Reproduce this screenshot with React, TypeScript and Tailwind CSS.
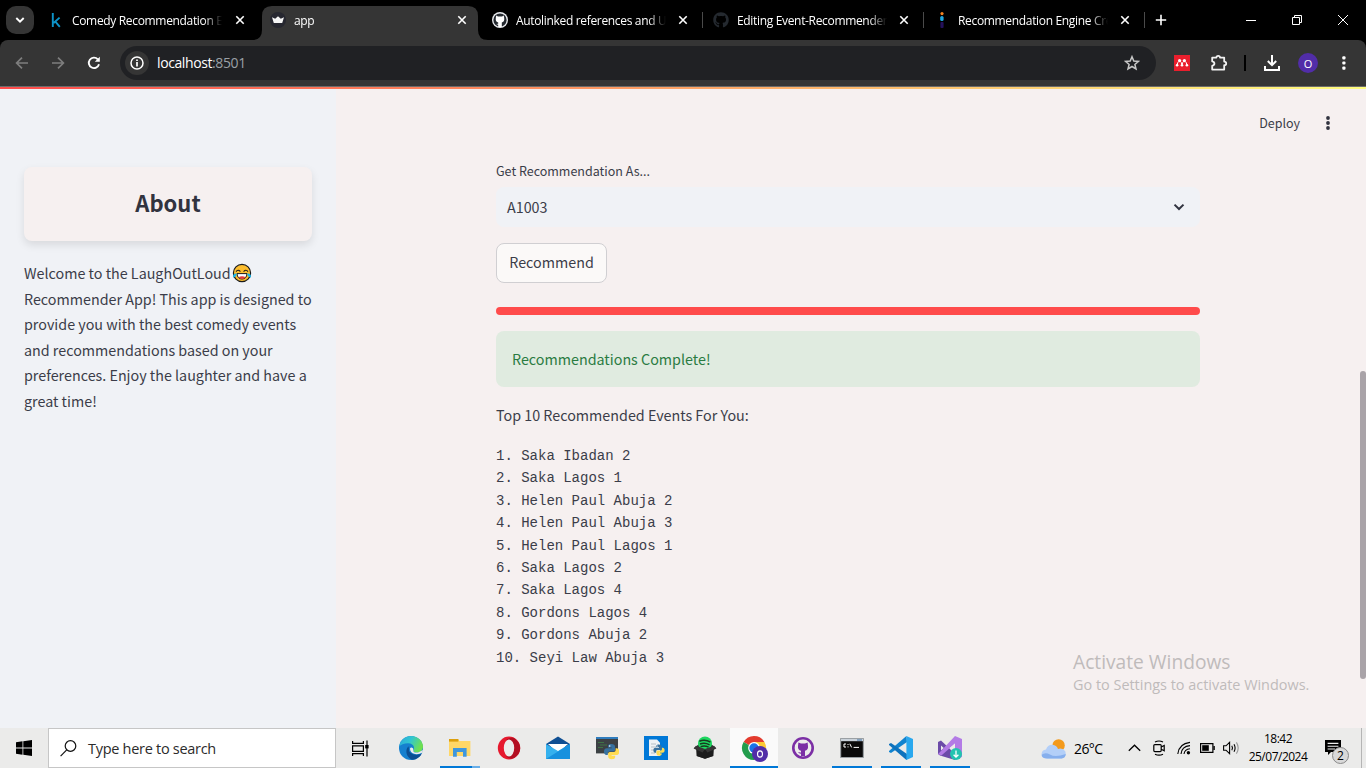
import React from "react";
import { FaGithub } from "react-icons/fa";

const TABS = [
  { title: "Comedy Recommendation Engine", icon: "k", active: false, box: "w-[222px] pl-2" },
  { title: "app", icon: "crown", active: true, box: "w-[221px] pl-2" },
  { title: "Autolinked references and URLs", icon: "github", active: false, box: "w-[221px] pl-[9px]" },
  { title: "Editing Event-Recommender/README", icon: "githubDark", active: false, box: "w-[221px] pl-[9px]" },
  { title: "Recommendation Engine Create", icon: "dots", active: false, box: "w-[221px] pl-[9px]" },
];

const EVENTS = [
  "1. Saka Ibadan 2",
  "2. Saka Lagos 1",
  "3. Helen Paul Abuja 2",
  "4. Helen Paul Abuja 3",
  "5. Helen Paul Lagos 1",
  "6. Saka Lagos 2",
  "7. Saka Lagos 4",
  "8. Gordons Lagos 4",
  "9. Gordons Abuja 2",
  "10. Seyi Law Abuja 3",
];

function Favicon({ kind }: { kind: string }) {
  if (kind === "k")
    return (
      <svg width="16" height="16" viewBox="0 0 16 16" fill="none" stroke="#0d93c8" strokeWidth="1.9">
        <path d="M4.8 1V15M11.6 5.6L5.6 11M7.4 9.6L11.8 14.8" />
      </svg>
    );
  if (kind === "crown")
    return (
      <svg width="16" height="16" viewBox="0 0 16 16">
        <circle cx="8" cy="8" r="8" fill="#262730" />
        <path d="M2 5.2L5.2 6.8L8 4.2L10.8 6.8L14 5.2L12.2 11H3.8Z" fill="#f5f5f5" />
      </svg>
    );
  if (kind === "github")
    return (
      <svg width="16" height="16" viewBox="0 0 16 16">
        <circle cx="8" cy="8" r="8" fill="#e8eaee" />
        <circle cx="8" cy="8" r="6.6" fill="#24292f" />
        <path d="M4.2 3.6L6 4.4H10L11.8 3.6L12.2 6C12.6 9 11.4 10 9.8 10.4V15H6.2V12.8L4.2 12L6.2 11.8V10.4C4.6 10 3.4 9 3.8 6Z" fill="#fff" />
      </svg>
    );
  if (kind === "githubDark") return <FaGithub size={16} color="#24292f" />;
  return (
    <svg width="16" height="16" viewBox="0 0 16 16">
      <circle cx="8" cy="1.6" r="1.6" fill="#f58220" />
      <rect x="6.2" y="4" width="3.4" height="5" rx="1.6" fill="#1fa8e0" />
      <rect x="6.4" y="10" width="3.2" height="6" rx="1" fill="#24115a" />
    </svg>
  );
}

function Close() {
  return (
    <svg width="10" height="10" viewBox="0 0 10 10" stroke="#fff" strokeWidth="1.6">
      <path d="M1.3 1.3L8.7 8.7M8.7 1.3L1.3 8.7" />
    </svg>
  );
}

function TabStrip() {
  return (
    <div className="flex h-10 shrink-0 bg-black pl-1.5">
      <button className="mt-1.5 flex h-7 w-7 shrink-0 items-center justify-center rounded-[10px] bg-[#353535]">
        <svg width="10" height="8" viewBox="0 0 10 8" fill="none" stroke="#fff" strokeWidth="1.9">
          <path d="M1.3 2L5 5.7L8.7 2" />
        </svg>
      </button>
      <div className="ml-1.5 flex w-[1105px]">
        {TABS.map((t, i) => (
          <div key={t.title} className={`relative flex h-10 shrink-0 items-center ${t.box}`}>
            {t.active && (
              <svg className="absolute -left-[10px] top-1.5" width="236" height="34" viewBox="0 0 236 34" fill="#353535">
                <path d="M0 34Q10 34 10 24V10Q10 0 20 0H216Q226 0 226 10V24Q226 34 236 34Z" />
              </svg>
            )}
            <div className="relative flex w-4 shrink-0 justify-center">
              <Favicon kind={t.icon} />
            </div>
            <div className="relative ml-2 w-[150px] shrink-0 overflow-hidden whitespace-nowrap pt-px font-['Open_Sans',sans-serif] text-[12px] leading-5 tracking-[-0.33px] text-white [mask-image:linear-gradient(to_right,black_88%,transparent)]">
              {t.title}
            </div>
            <div className={i > 1 ? "relative ml-[12px]" : "relative ml-[13px]"}>
              <Close />
            </div>
            {i > 1 && <div className="ml-auto mr-px h-4 w-px bg-[#4a4a4a]" />}
          </div>
        ))}
      </div>
      <div className="flex items-center pl-[10px]">
        <svg width="12" height="12" viewBox="0 0 12 12" stroke="#fff" strokeWidth="1.6">
          <path d="M6 .8V11.2M.8 6H11.2" />
        </svg>
      </div>
      <div className="ml-auto flex">
        <div className="flex w-[46px] items-center justify-center">
          <div className="mt-px h-px w-[10px] bg-white" />
        </div>
        <div className="flex w-[46px] items-center justify-center">
          <svg width="10" height="10" viewBox="0 0 10 10" fill="none" stroke="#fff">
            <path d="M.5 2.5H7.5V9.5H.5ZM2.5 2.5V.5H9.5V7.5H7.5" />
          </svg>
        </div>
        <div className="flex w-[46px] items-center justify-center">
          <svg width="10" height="10" viewBox="0 0 10 10" stroke="#fff">
            <path d="M0 0L10 10M10 0L0 10" />
          </svg>
        </div>
      </div>
    </div>
  );
}

function Toolbar() {
  return (
    <div className="shrink-0 bg-black">
      <div className="flex h-[47px] items-center rounded-t-lg border-b border-[#6b6b6b] bg-[#353535] pl-[14px]">
        <svg width="16" height="16" viewBox="0 0 16 16" fill="none" stroke="#7e7e7e" strokeWidth="1.7">
          <path d="M14 8H3M8 2.6L2.6 8L8 13.4" />
        </svg>
        <svg className="ml-5" width="16" height="16" viewBox="0 0 16 16" fill="none" stroke="#7e7e7e" strokeWidth="1.7">
          <path d="M2 8H13M8 2.6L13.4 8L8 13.4" />
        </svg>
        <svg className="ml-5" width="16" height="16" viewBox="0 0 16 16" fill="none" stroke="#fff" strokeWidth="1.9">
          <path d="M13 9.3A5.2 5.2 0 1 1 11.8 4.3" />
          <path d="M13.8 1.8V6.8H8.8Z" fill="#fff" stroke="none" />
        </svg>
        <div className="ml-[18px] flex h-[34px] w-[1036px] items-center rounded-full bg-[#202124] pl-[5px] pr-[16px]">
          <div className="flex h-6 w-6 items-center justify-center rounded-full bg-[#353535]">
            <svg width="14" height="14" viewBox="0 0 14 14" fill="none" stroke="#fff" strokeWidth="1.5">
              <circle cx="7" cy="7" r="6" />
              <path d="M7 6V10.4M7 3.6V5" strokeWidth="1.7" />
            </svg>
          </div>
          <div className="ml-2 font-['Open_Sans',sans-serif] text-[14px] leading-5 tracking-[-0.4px] text-white">
            localhost<span className="text-[#9aa0a6]">:8501</span>
          </div>
          <svg className="ml-auto" width="16" height="16" viewBox="0 0 16 16" fill="none" stroke="#c7c7c7" strokeWidth="1.5">
            <path d="M8 1.7L9.8 6L14.4 6.4L10.9 9.4L12 14L8 11.5L4 14L5.1 9.4L1.6 6.4L6.2 6Z" />
          </svg>
        </div>
        <svg className="ml-[18px]" width="16" height="16" viewBox="0 0 16 16">
          <rect width="16" height="16" fill="#ea1f2d" />
          <g fill="#fff">
            <circle cx="5.6" cy="5.6" r="1.6" />
            <circle cx="10.4" cy="5.6" r="1.6" />
            <circle cx="3.1" cy="10.2" r="1.3" />
            <circle cx="8" cy="10.2" r="1.3" />
            <circle cx="12.9" cy="10.2" r="1.3" />
          </g>
          <path d="M3.1 10Q3.2 7.4 5 6.4M7.8 9.4Q7.6 7.4 6.4 6.4M8.2 9.4Q8.4 7.4 9.6 6.4M12.9 10Q12.8 7.4 11 6.4" fill="none" stroke="#fff" strokeWidth="1" />
        </svg>
        <svg className="ml-5" width="18" height="18" viewBox="0 0 18 18" fill="none" stroke="#f2f2f2" strokeWidth="1.8" strokeLinejoin="round">
          <path d="M2.2 3.6H6.4Q6.4 1.8 8.2 1.8T10 3.6H14.2V7.6Q16.2 7.6 16.2 9.4T14.2 11.2V15.6H2.2V11.8Q4.4 11.4 4.4 9.6T2.2 7.4Z" />
        </svg>
        <div className="ml-4 h-4 w-0.5 bg-black" />
        <svg className="ml-[18px]" width="16" height="16" viewBox="0 0 16 16" fill="none" stroke="#fff" strokeWidth="2">
          <path d="M8 0V10M3.8 6L8 10.2L12.2 6M1 11V15H15V11" />
        </svg>
        <div className="ml-[18px] flex h-5 w-5 items-center justify-center rounded-full bg-[#512da8] font-['Open_Sans',sans-serif] text-[11px] leading-none text-white">
          O
        </div>
        <svg className="ml-6" width="4" height="16" viewBox="0 0 4 16" fill="#fff">
          <rect x=".3" y="1.2" width="3.2" height="3.2" rx="1" />
          <rect x=".3" y="6.4" width="3.2" height="3.2" rx="1" />
          <rect x=".3" y="11.6" width="3.2" height="3.2" rx="1" />
        </svg>
      </div>
    </div>
  );
}

function Joy() {
  return (
    <svg className="ml-px inline-block align-[-4px]" width="20" height="20" viewBox="0 0 20 20">
      <circle cx="10" cy="10" r="8.6" fill="#fcbd2e" stroke="#1b1b1b" strokeWidth="1.2" />
      <path d="M4 8.6Q6 6 8.4 8.6M11.6 8.6Q14 6 16 8.6" fill="none" stroke="#1b1b1b" strokeWidth="1.1" />
      <path d="M5 10.6H15Q14.6 16 10 16T5 10.6Z" fill="#fff" stroke="#1b1b1b" />
      <path d="M6.4 14.2Q10 12.4 13.6 14.2Q12.4 16 10 16T6.4 14.2Z" fill="#e53935" />
      <path d="M1 14.4Q.6 10.6 4.6 10.2Q5 14 1 14.4ZM19 14.4Q19.4 10.6 15.4 10.2Q15 14 19 14.4Z" fill="#19b5ea" />
    </svg>
  );
}

function Sidebar() {
  return (
    <aside className="w-[336px] shrink-0 bg-[#f0f2f6] px-6 pt-[78px] text-[#3b3d49]">
      <div className="flex h-[74px] items-center justify-center rounded-lg bg-[#f6f0f0] pb-1 shadow-[0_4px_8px_rgba(0,0,0,0.1)]">
        <h2 className="text-[22px] font-bold leading-none text-[#31333f]">About</h2>
      </div>
      <p className="mt-[19px] whitespace-nowrap text-[14.32px] leading-[25.6px]">
        Welcome to the LaughOutLoud
        <Joy />
        <br />
        Recommender App! This app is designed to
        <br />
        provide you with the best comedy events
        <br />
        and recommendations based on your
        <br />
        preferences. Enjoy the laughter and have a
        <br />
        great time!
      </p>
    </aside>
  );
}

function MainPanel() {
  return (
    <main className="relative flex-1 bg-[#f6f0f0] pl-40 text-[#3b3d49]">
      <div className="absolute right-[36px] top-[24px] flex items-center">
        <span className="text-[12.5px] leading-5">Deploy</span>
        <svg className="ml-[26px]" width="4" height="14" viewBox="0 0 4 14" fill="#31333f">
          <circle cx="2" cy="2" r="1.9" />
          <circle cx="2" cy="7" r="1.9" />
          <circle cx="2" cy="12" r="1.9" />
        </svg>
      </div>
      <div className="w-[704px] pt-[72px]">
        <div className="text-[12.5px] leading-5">Get Recommendation As...</div>
        <div className="mt-[6px] flex h-10 items-center rounded-lg bg-[#f0f2f6] pl-[11px] pr-[15px]">
          <span className="text-[14.32px] leading-6">A1003</span>
          <svg className="ml-auto" width="12" height="8" viewBox="0 0 12 8" fill="none" stroke="#31333f" strokeWidth="2">
            <path d="M1.5 1.6L6 6L10.5 1.6" />
          </svg>
        </div>
        <button className="mt-4 flex h-10 w-[111px] items-center justify-center rounded-lg border border-[#d0cfd2] bg-[#fbf9f8] pb-0.5 text-[14.32px] leading-6">
          Recommend
        </button>
        <div className="mt-6 h-2 rounded bg-[#ff4b4b]" />
        <div className="mt-4 flex h-14 items-center rounded-lg bg-[#e0ebe0] pl-4 text-[14.32px] leading-6 text-[#2a7b42]">
          Recommendations Complete!
        </div>
        <p className="mt-[15px] text-[14.32px] leading-[25.6px]">Top 10 Recommended Events For You:</p>
        <div className="mt-[17.4px] whitespace-pre font-['Liberation_Mono',monospace] text-[14px] leading-[22.4px]">
          {EVENTS.map((e) => (
            <div key={e}>{e}</div>
          ))}
        </div>
      </div>
      <div className="absolute right-0 top-[282px] h-[308px] w-1.5 rounded-[3px] bg-[#a9a3a8]" />
      <div className="absolute left-[737px] top-[561px] whitespace-nowrap font-['Open_Sans',sans-serif] text-[#bfbbbb]">
        <div className="text-[19.2px] leading-6">Activate Windows</div>
        <div className="text-[14.43px] leading-[22px]">Go to Settings to activate Windows.</div>
      </div>
    </main>
  );
}

function EdgeIcon() {
  return (
    <svg width="24" height="24" viewBox="0 0 24 24">
      <defs>
        <linearGradient id="edgeTop" x1="0" y1="0" x2="1" y2=".4">
          <stop offset="0" stopColor="#2aa5dc" />
          <stop offset=".5" stopColor="#31c6d0" />
          <stop offset="1" stopColor="#6fe04f" />
        </linearGradient>
      </defs>
      <circle cx="12" cy="12" r="12" fill="#1580cf" />
      <path d="M.2 10.4C1.4 4 6.2 0 12 0C19 0 24 5.2 24 10.6C24 14.4 21.2 16.6 18 16.6C15.8 16.6 14 15.8 14.4 14.6C16 12.2 15 7.4 9.4 7.2C5.6 7 1.8 8.4 .2 10.4Z" fill="url(#edgeTop)" />
      <path d="M9.6 10.2C6.8 12.4 6.6 17.6 9.4 21C11 23 13 24 14 23.8C17.6 23.4 20.4 21.4 22.2 18.2C17 20.6 10.6 19.4 9.6 14.8Z" fill="#0c4f93" />
      <path d="M10.6 10.4Q8.6 13.6 11.2 16.6Q15.4 20.4 22.8 17.6Q22 19 21 20Q14 22 9.4 16.2Q8 12 10.6 10.4Z" fill="#0c4f93" />
      <path d="M14.2 12.4Q12 10.6 11 12.4Q10.8 16.4 16 18Q20 18.6 23.4 16.4L24 14L19 16.6Q14 16.8 14.4 14.4Z" fill="#ececeb" />
    </svg>
  );
}

function ExplorerIcon() {
  return (
    <svg width="24" height="24" viewBox="0 0 24 24">
      <path d="M1 3H10L11.4 5H22.4V20H1Z" fill="#ffd767" />
      <path d="M1 3H10.4V5.6H1Z" fill="#dc9f0d" />
      <path d="M5 12H18.6V20.8H15V16H8.8V20.8H5Z" fill="#3f97dd" />
    </svg>
  );
}

function OperaIcon() {
  return (
    <svg width="24" height="24" viewBox="0 0 24 24">
      <ellipse cx="12" cy="12" rx="11.2" ry="11.4" fill="#e6192e" />
      <path d="M17 2Q23 6 23.2 12T17 22Q12 24 9 20Q17 20 17 12T9 4Q12 1 17 2Z" fill="#b30f22" />
      <ellipse cx="12" cy="12" rx="5.2" ry="8.6" fill="#ececeb" />
    </svg>
  );
}

function MailIcon() {
  return (
    <svg width="24" height="24" viewBox="0 0 24 24">
      <path d="M0 8L12 .6L24 8V12H0Z" fill="#0f4f93" />
      <path d="M2 8H22L12 17Z" fill="#fff" />
      <path d="M0 8L12 15L24 8V23H0Z" fill="#35b1ee" />
      <path d="M0 23L24 8V23Z" fill="#1791de" />
    </svg>
  );
}

function Python({ x, y, s }: { x: number; y: number; s: number }) {
  return (
    <g transform={`translate(${x} ${y}) scale(${s})`}>
      <path d="M7.8 0C4 0 4.2 1.8 4.2 3.6H8V4.4H3C.8 4.4 0 5.8 0 8S1 11.6 2.6 11.6H4V9.4Q4 7.8 5.8 7.8H10Q11.6 7.8 11.6 6V3Q11.6 0 7.8 0Z" fill="#37719f" />
      <path d="M8.2 16C12 16 11.8 14.2 11.8 12.4H8V11.6H13C15.2 11.6 16 10.2 16 8S15 4.4 13.4 4.4H12.2V6.6Q12.2 8.4 10.2 8.4H6Q4.4 8.4 4.4 10V13Q4.4 16 8.2 16Z" fill="#ffdc52" />
      <circle cx="6" cy="2" r=".8" fill="#fff" />
    </g>
  );
}

function PyConsoleIcon() {
  return (
    <svg width="24" height="24" viewBox="0 0 24 24">
      <rect x="1" y="1" width="22" height="16.4" fill="#3c4144" />
      <rect x="1" y="1" width="22" height="2" fill="#2e7cbd" />
      <path d="M3 6.5H9M5 9H12M3 11.5H8" stroke="#3f7346" />
      <Python x={9} y={8} s={0.95} />
    </svg>
  );
}

function IdleIcon() {
  return (
    <svg width="24" height="24" viewBox="0 0 24 24">
      <rect width="24" height="24" fill="#0078d7" />
      <path d="M5 3.6H13L16 6.8V20H5Z" fill="#eef2f5" />
      <path d="M7 8H12M7 11H12M7 14H11M7 17H11" stroke="#b7c0c7" />
      <Python x={9.4} y={8.6} s={0.7} />
    </svg>
  );
}

function SpotifyIcon() {
  return (
    <svg width="24" height="24" viewBox="0 0 24 24">
      <path d="M1 12L6 8H18L23 12L20 14V20L12 22.8L4 20V14Z" fill="#303030" />
      <circle cx="12" cy="7.4" r="7" fill="#1ed760" />
      <path d="M6.4 5.2Q12 3.2 17.4 6M7 8Q12 6.4 16.6 8.8M7.6 10.6Q12 9.2 15.6 11.2" fill="none" stroke="#17391f" strokeWidth="1.5" />
      <path d="M3 10.4L12 13.4L21 10.4L20.4 20L12 22.8L3.6 20Z" fill="#1d1d1d" />
      <path d="M.6 12.4L3 9.8L12 13L9.6 16.4ZM23.4 12.4L21 9.8L12 13L14.4 16.4Z" fill="#363636" />
    </svg>
  );
}

function ChromeIcon() {
  return (
    <svg className="overflow-visible" width="24" height="24" viewBox="0 0 24 24">
      <path d="M12 12L1.6 6A12 12 0 0 1 22.4 6Z" fill="#e33b2e" />
      <path d="M12 12L1.6 6A12 12 0 0 0 12 24Z" fill="#229d4c" />
      <path d="M12 12V24A12 12 0 0 0 22.4 6H12Z" fill="#fcc934" />
      <circle cx="12" cy="12" r="5.9" fill="#fff" />
      <circle cx="12" cy="12" r="4.7" fill="#1a73e8" />
      <circle cx="18" cy="18" r="8" fill="#512da8" />
      <ellipse cx="18" cy="18" rx="2.5" ry="3.1" fill="none" stroke="#fff" strokeWidth="1.1" />
    </svg>
  );
}

function GithubDesktopIcon() {
  return (
    <svg width="24" height="24" viewBox="0 0 24 24">
      <circle cx="12" cy="12" r="11" fill="#7b2fa5" />
      <circle cx="12" cy="12" r="8.4" fill="#ececeb" />
      <path d="M7.4 6.6L10 7.6H14L16.6 6.6L17 10C17.4 13 16 14.4 14 14.8V20H10V17.8Q8 18 7 16Q8.6 16.6 10 16.4V14.8C8 14.4 6.6 13 7 10Z" fill="#7b2fa5" />
    </svg>
  );
}

function CmdIcon() {
  return (
    <svg width="24" height="24" viewBox="0 0 24 24">
      <rect x=".7" y="2.5" width="22.6" height="19" fill="#0a0a0a" stroke="#9aa0a4" />
      <rect x="1" y="3" width="22" height="2.2" fill="#c9d2da" />
      <path d="M17 4H22" stroke="#3f6f9f" />
      <path d="M6 8H4V11H6M8 8V9M8 10.4V11.4M9.8 7.8L11.6 11.4M13.6 11.4H19" fill="none" stroke="#fff" />
    </svg>
  );
}

function VsCodeIcon() {
  return (
    <svg width="24" height="24" viewBox="0 0 24 24">
      <path d="M17.4 0L18 6L2 17L0 16V15Z" fill="#1083cf" />
      <path d="M0 8L2 7L18 18V23.6L17.4 24L0 9Z" fill="#0d72bd" />
      <path d="M17.4 0L24 3V21L17.4 24Z" fill="#29a8ee" />
    </svg>
  );
}

function VisualStudioIcon() {
  return (
    <svg width="24" height="24" viewBox="0 0 24 24">
      <path d="M0 6L3 4.6L12 13L18 20L17 24L2 19.4L0 18Z" fill="#6b4aa8" />
      <path d="M3 9.4V14.6L5.8 12Z" fill="#ececeb" />
      <path d="M17 0L24 3V21L17 24V7.6L3.4 19.4L0 18L3 15Z" fill="#b37be6" />
      <path d="M17 7.6L11.6 12L17 16.4Z" fill="#ececeb" />
      <circle cx="18" cy="18" r="6" fill="#22c3b0" />
      <path d="M18 14.4V21M15.6 18.8L18 21.2L20.4 18.8" fill="none" stroke="#fff" strokeWidth="1.3" />
    </svg>
  );
}

const APPS = [
  { name: "edge", Icon: EdgeIcon, mark: "" },
  { name: "explorer", Icon: ExplorerIcon, mark: "split" },
  { name: "opera", Icon: OperaIcon, mark: "" },
  { name: "mail", Icon: MailIcon, mark: "" },
  { name: "pyconsole", Icon: PyConsoleIcon, mark: "" },
  { name: "idle", Icon: IdleIcon, mark: "" },
  { name: "spotify", Icon: SpotifyIcon, mark: "" },
  { name: "chrome", Icon: ChromeIcon, mark: "active" },
  { name: "github", Icon: GithubDesktopIcon, mark: "" },
  { name: "cmd", Icon: CmdIcon, mark: "open" },
  { name: "vscode", Icon: VsCodeIcon, mark: "open" },
  { name: "vs", Icon: VisualStudioIcon, mark: "open" },
];

function Mark({ kind }: { kind: string }) {
  if (kind === "split")
    return (
      <div className="flex h-0.5 w-10">
        <div className="w-8 bg-[#0078d7]" />
        <div className="w-2 bg-[#69aee8]" />
      </div>
    );
  if (kind === "active") return <div className="h-0.5 w-12 bg-[#0078d7]" />;
  if (kind === "open") return <div className="h-0.5 w-10 bg-[#0078d7]" />;
  return <div className="h-0.5" />;
}

function Taskbar() {
  return (
    <div className="flex h-10 shrink-0 bg-[#ebebea] font-['Open_Sans',sans-serif] text-black">
      <div className="flex w-12 items-center justify-center">
        <svg width="16" height="16" viewBox="0 0 16 16">
          <path d="M0 2.2L6.5 1.3V7.6H0ZM7.3 1.2L16 0V7.6H7.3ZM0 8.4H6.5V14.7L0 13.8ZM7.3 8.4H16V16L7.3 14.8Z" />
        </svg>
      </div>
      <div className="flex h-10 w-72 items-center border border-[#c6c6c6] bg-white pl-[11px]">
        <svg width="17" height="17" viewBox="0 0 17 17" fill="none" stroke="#111" strokeWidth="1.2">
          <circle cx="10.5" cy="6" r="5.3" />
          <path d="M6.7 9.8L.6 16.2" />
        </svg>
        <span className="ml-[11px] pt-0.5 text-[14.5px] tracking-[-0.29px] text-[#2b2b2b]">Type here to search</span>
      </div>
      <div className="flex w-[51px] items-center pl-4">
        <svg width="17" height="17" viewBox="0 0 17 17" fill="none" stroke="#000" strokeWidth="1.2">
          <path d="M.6 1V3.4H11.4V1M.6 5.8H11.4V11.4H.6ZM.6 16V13.6H11.4V16M15 .5V16.5" />
          <rect x="13.2" y="5" width="3.4" height="3.4" fill="#000" stroke="none" />
        </svg>
      </div>
      <div className="flex">
        {APPS.map(({ name, Icon, mark }) => (
          <div
            key={name}
            className={
              mark === "active"
                ? "mr-px flex w-12 flex-col items-center bg-[#fafafa]"
                : "mr-px flex w-12 flex-col items-center"
            }
          >
            <div className="flex flex-1 items-center pt-0.5">
              <Icon />
            </div>
            <Mark kind={mark} />
          </div>
        ))}
      </div>
      <div className="ml-auto flex items-center">
        <svg className="mt-0.5" width="26" height="20" viewBox="0 0 26 20">
          <circle cx="17.6" cy="6.4" r="6.2" fill="#f39a1c" />
          <path d="M6 19.6Q.6 19.2 .6 14.8Q1 11 5 10.6Q6.4 5.6 11.6 5.8Q15.6 6.2 17 10Q22 8.6 24.4 12.4Q26 18.6 20.6 19.6Z" fill="#b3cff8" />
          <path d="M6 19.6Q.6 19.2 .6 15.8Q4 13 9 15.4Q14 18.6 24.8 15Q24.4 19 20.6 19.6Z" fill="#86afed" />
        </svg>
        <span className="ml-[7px] w-[31px] whitespace-nowrap text-[14px] tracking-[-0.6px]">26°C</span>
        <svg className="ml-[23px]" width="13" height="8" viewBox="0 0 13 8" fill="none" stroke="#000" strokeWidth="1.3">
          <path d="M.8 6.8L6.5 1.2L12.2 6.8" />
        </svg>
        <svg className="ml-3" width="12" height="16" viewBox="0 0 12 16" fill="none" stroke="#000" strokeWidth="1.2">
          <rect x=".8" y="4.6" width="7.4" height="7" rx="1" />
          <path d="M8.2 7L11.2 5.4V10.8L8.2 9.2M2 2Q6 0 10 2M2 14.2Q6 16.2 10 14.2" />
        </svg>
        <svg className="ml-[12px]" width="14" height="14" viewBox="0 0 14 14" fill="none" stroke="#000" strokeWidth="1.1">
          <path d="M.8 13Q2 2.6 13 1.4M4 13Q4.6 5.4 13 4.6M7 13Q7.6 8.4 13 7.8" />
          <circle cx="11.4" cy="11.8" r="1.7" fill="#000" stroke="none" />
        </svg>
        <svg className="ml-[9px]" width="15" height="10" viewBox="0 0 15 10">
          <path d="M.6 .6H12.9V9.4H.6Z" fill="none" stroke="#000" strokeWidth="1.2" />
          <rect x="2.2" y="2.2" width="6.6" height="5.6" />
          <rect x="13.4" y="3" width="1.4" height="4" />
        </svg>
        <svg className="ml-2" width="17" height="14" viewBox="0 0 17 14" fill="none" stroke="#000" strokeWidth="1.1">
          <path d="M.6 4.8H3L6.6 1.4V12.6L3 9.2H.6ZM8.8 4.8Q10.2 7 8.8 9.2M11 3.2Q13.2 7 11 10.8" />
          <path d="M13.4 1.4Q17 7 13.4 12.6" stroke="#9a9a9a" />
        </svg>
        <div className="ml-2 w-[60px] text-center text-[12px] leading-[18px] tracking-[-0.5px]">
          <div>18:42</div>
          <div>25/07/2024</div>
        </div>
        <div className="relative ml-[17px] mt-2 h-6 w-6">
          <svg width="16" height="16" viewBox="0 0 16 16">
            <path d="M0 0H16V12H6L3 15V12H0Z" />
            <path d="M2.6 3.4H13.4M2.6 6.2H13.4M2.6 9H10" stroke="#ececeb" strokeWidth="1.1" />
          </svg>
          <div className="absolute left-[7px] top-[7px] flex h-[17px] w-[17px] items-center justify-center rounded-full border border-[#8a8a8a] bg-[#d9d9d9] text-[12px] leading-none">
            2
          </div>
        </div>
        <div className="ml-3 mr-1 h-10 w-px bg-[#b5b5b5]" />
      </div>
    </div>
  );
}

export default function App() {
  return (
    <div className="flex h-[768px] w-[1366px] flex-col overflow-hidden font-['Noto_Sans_CJK_SC',sans-serif]">
      <TabStrip />
      <Toolbar />
      <div className="h-[2px] shrink-0 bg-[linear-gradient(90deg,#ff4b4b,#fffd80)]" />
      <div className="flex min-h-0 flex-1">
        <Sidebar />
        <MainPanel />
      </div>
      <Taskbar />
    </div>
  );
}
